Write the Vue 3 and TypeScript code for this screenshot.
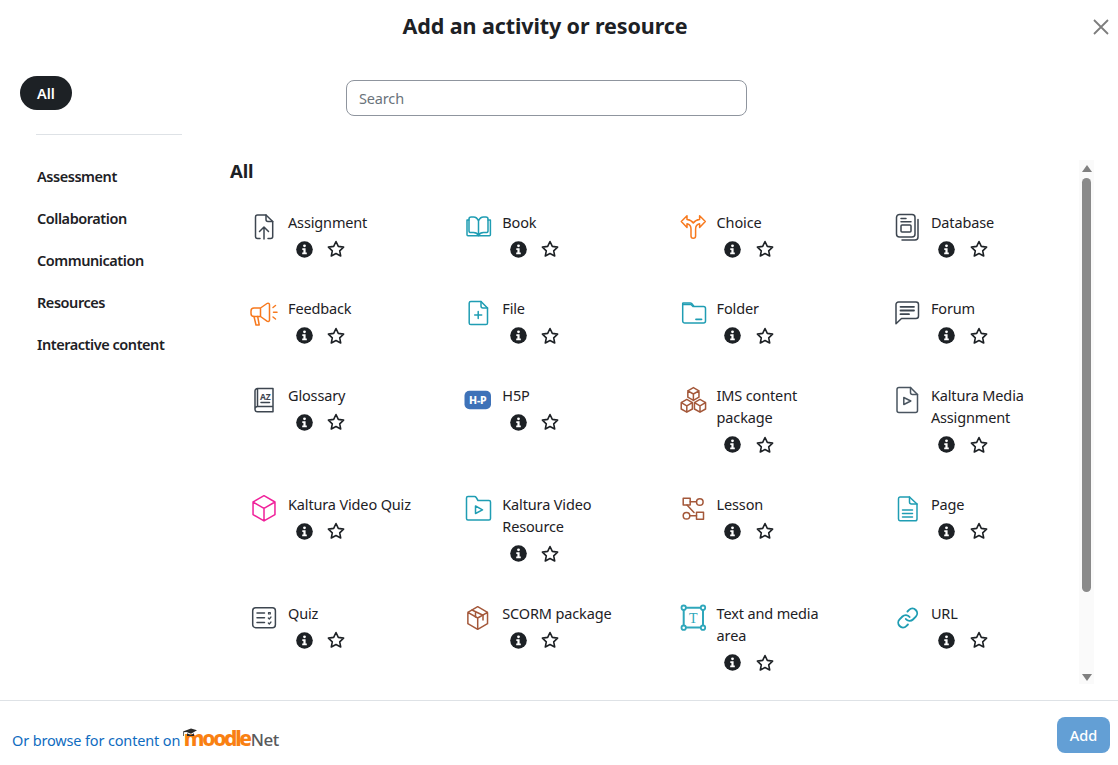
<script setup lang="ts">
interface Activity {
  name: string
  color: string
  icon: string
}

const cube = (cx: number, cy: number, r: number): string => {
  const w = +(r * 0.87).toFixed(2)
  const h = +(r * 0.5).toFixed(2)
  return `<path d="M${cx} ${cy - r}L${cx + w} ${cy - h}V${cy + h}L${cx} ${cy + r}L${cx - w} ${cy + h}V${cy - h}ZM${cx - w} ${cy - h}L${cx} ${cy}L${cx + w} ${cy - h}M${cx} ${cy}V${cy + r}"/>`
}

const dark = '#3d4650'
const teal = '#1f9db3'
const orange = '#f7791e'
const brown = '#a4583a'

const activities: Activity[] = [
  { name: 'Assignment', color: dark, icon: '<path d="M12 27.5H9.5a2 2 0 0 1-2-2V6a2 2 0 0 1 2-2H18l6.7 6.5v15a2 2 0 0 1-2 2H20"/><path d="M18 4v4.5a2 2 0 0 0 2 2h4.7"/><path d="M16 28V16M11.5 20.5L16 16l4.5 4.5"/>' },
  { name: 'Book', color: teal, icon: '<path d="M7 9H5v14.7a1 1 0 0 0 1 1h21.4a1 1 0 0 0 1-1V9H26"/><path d="M16.5 10c-1-2.5-3-4-5-4H9.2C8 6 7 6.8 7 8v12c0 1 .8 1.6 2 1.6h2.5c2 0 4 .8 5 3 1-2.2 3-3 5-3H24c1.2 0 2-.6 2-1.6V8c0-1.200-1-2-2.200-2h-2.300c-2 0-4 1.500-5 4zM16.500 10v14.500"/>' },
  { name: 'Choice', color: orange, icon: '<path d="M14 25a2.300 2.300 0 0 0 4.600 0v-7c0-3 1-4.500 4-5.200v3.700L28.300 10.500 22.600 4.800v3.600c-2.800.2-5 1.600-6.300 3.600-1.300-2-3.500-3.400-6.300-3.600V4.800L4.300 10.500 10 16.500v-3.700c3 .7 4 2.200 4 5.200z"/>' },
  { name: 'Database', color: dark, icon: '<rect x="5.500" y="3.500" width="18.500" height="22.500" rx="3"/><path d="M27 8.500V26a3 3 0 0 1-3 3H11"/><path d="M10 7.500h5M10 10.800h10"/><rect x="10" y="14" width="10" height="7" rx="1"/>' },
  { name: 'Feedback', color: orange, icon: '<path d="M12.500 11H6a3 3 0 0 0-3 3v2.500a3 3 0 0 0 3 3h6.500zM12.500 11l6.500-4.500c1.200-.8 2.500 0 2.500 1.200V23c0 1.200-1.300 2-2.500 1.200l-6.500-4.700"/><path d="M6 19.500L8 28h3.200l-1.500-8.500"/><path d="M25 10.500l2.500-2M25.500 15.300h3.500M25 20l2.500 2"/>' },
  { name: 'File', color: teal, icon: '<path d="M8.800 4.500H19l6.500 6.500v15a1.600 1.600 0 0 1-1.600 1.600H8.800A1.600 1.600 0 0 1 7.200 26V6a1.600 1.600 0 0 1 1.600-1.500z"/><path d="M19 4.500V9a2 2 0 0 0 2 2h4.500"/><path d="M16.200 14.500v7M12.700 18h7"/>' },
  { name: 'Folder', color: teal, icon: '<path d="M6 6h7.500c1 0 1.500.5 2 1.300L17 9.500h9.500a2 2 0 0 1 2 2V24a2 2 0 0 1-2 2H8a2 2 0 0 1-2.300-2V6.500z"/><path d="M5.800 7.500H14l2 2"/><path d="M19 22.300h5.500" stroke-width="1.800"/>' },
  { name: 'Forum', color: dark, icon: '<path d="M7.500 5h17.500a2.500 2.500 0 0 1 2.500 2.500V19a2.500 2.500 0 0 1-2.500 2.500H10.500L5 26.800V7.500A2.500 2.500 0 0 1 7.500 5z"/><path d="M9.500 9.800H23M9.500 13.500H23M9.500 17.200H18" stroke-width="1.800"/>' },
  { name: 'Glossary', color: dark, icon: '<path d="M25 4.500H9.500A2.500 2.500 0 0 0 7 7v18.500A2.500 2.500 0 0 0 9.500 27.800H25zM7 25a2.500 2.500 0 0 1 2.500-2.500H25M9.500 5v17"/><text x="17.300" y="16" font-family="Noto Sans" font-size="8.500" font-weight="700" text-anchor="middle" fill="#3d4650" stroke="none">AZ</text><path d="M13 18.500h8.500" stroke-width="1.500"/>' },
  { name: 'H5P', color: '#3e72b8', icon: '<rect x="2.500" y="6.800" width="26.500" height="18.500" rx="5" fill="#3e72b8" stroke="none"/><text x="15.800" y="20" font-family="Noto Sans" font-size="10.500" font-weight="800" text-anchor="middle" fill="#fff" stroke="none">H-P</text>' },
  { name: 'IMS content package', color: brown, icon: cube(16.4, 10, 6.4) + cube(9.800, 21.800, 6.400) + cube(23, 21.800, 6.400) },
  { name: 'Kaltura Media Assignment', color: '#4a5560', icon: '<path d="M8 3.500h11.500L26.500 10.500V26.500a2 2 0 0 1-2 2H8a2 2 0 0 1-2-2V5.500a2 2 0 0 1 2-2z"/><path d="M19.500 3.500V8.500a2 2 0 0 0 2 2h5"/><path d="M12.800 13.500l7 3.500-7 3.500z"/>' },
  { name: 'Kaltura Video Quiz', color: '#f0209a', icon: cube(16, 15.300, 12.600) },
  { name: 'Kaltura Video Resource', color: teal, icon: '<path d="M6 3.500h6.500c.8 0 1.300.4 1.700 1L16 7.500h11a1.500 1.500 0 0 1 1.500 1.500V25.500A1.500 1.500 0 0 1 27 27H6a1.500 1.500 0 0 1-1.500-1.500V5A1.500 1.500 0 0 1 6 3.500z"/><path d="M13.500 13l7 3.800-7 3.700z"/>' },
  { name: 'Lesson', color: brown, icon: '<rect x="6.200" y="5.300" width="7" height="6.800"/><circle cx="22.800" cy="9" r="3.300"/><path d="M13.200 8.800h6.300M10 12.100L17 19.500"/><circle cx="9.500" cy="22.700" r="3.300"/><rect x="19.500" y="19.200" width="7" height="7"/><path d="M12.800 22.700h6.700"/>' },
  { name: 'Page', color: teal, icon: '<path d="M9 4h9.500l7.500 7v15a1.800 1.800 0 0 1-1.800 1.800H9A1.800 1.800 0 0 1 7.500 26V5.800A1.800 1.800 0 0 1 9 4z"/><path d="M18.500 4v5a2 2 0 0 0 2 2H26"/><path d="M11.500 17h10M11.500 20.500h10M11.500 24h10"/>' },
  { name: 'Quiz', color: dark, icon: '<rect x="4.700" y="5.700" width="22.700" height="20" rx="3"/><path d="M9 11h7.500M9 15.700h7.500M9 20.500h7.500"/><path d="M20.500 10.500h1.800v1.500h-1.800zM20.300 16l1 1 1.700-2M20.300 21l1 1 1.700-2" stroke-width="1.200"/>' },
  { name: 'SCORM package', color: brown, icon: cube(15.700, 16, 11.300) + '<path d="M10 8L21 13.200V18M13.500 10.500V15"/>' },
  { name: 'Text and media area', color: '#2fa7bb', icon: '<rect x="6.700" y="5.700" width="19.300" height="19.800" stroke-width="2"/><circle cx="6.700" cy="5.700" r="2.200" fill="#fff" stroke-width="1.800"/><circle cx="26" cy="5.700" r="2.200" fill="#fff" stroke-width="1.800"/><circle cx="6.700" cy="25.700" r="2.200" fill="#fff" stroke-width="1.800"/><circle cx="26" cy="25.700" r="2.200" fill="#fff" stroke-width="1.800"/><text x="16.300" y="21" font-family="Liberation Serif" font-size="14" font-weight="400" text-anchor="middle" fill="#2fa7bb" stroke="none">T</text>' },
  { name: 'URL', color: teal, icon: '<g transform="translate(5.300 4.600) scale(.95)" stroke-width="2"><path d="M10 13a5 5 0 0 0 7.540.54l3-3a5 5 0 0 0-7.070-7.070l-1.720 1.710"/><path d="M14 11a5 5 0 0 0-7.540-.54l-3 3a5 5 0 0 0 7.070 7.070l1.710-1.710"/></g>' },
]

const categories = ['Assessment', 'Collaboration', 'Communication', 'Resources', 'Interactive content']
</script>

<template>
  <div class="modal">
    <header class="head">
      <h1 class="title">Add an activity or resource</h1>
      <button class="close" type="button" aria-label="Close">
        <svg width="16" height="16" viewBox="0 0 16 16"><path d="M1 1l14 14M15 1L1 15" /></svg>
      </button>
    </header>

    <div class="body">
      <aside class="side">
        <button class="pill" type="button">All</button>
        <hr class="rule" />
        <nav class="nav">
          <a v-for="c in categories" :key="c" class="nav-item">{{ c }}</a>
        </nav>
      </aside>

      <main class="main">
        <div class="search-row">
          <input class="search" type="text" placeholder="Search" />
        </div>
        <div class="scroller">
          <div class="content">
            <h2 class="section">All</h2>
            <div class="grid">
              <div v-for="a in activities" :key="a.name" class="item">
                <svg
                  class="icon"
                  viewBox="0 0 32 32"
                  width="32"
                  height="32"
                  fill="none"
                  :stroke="a.color"
                  stroke-width="1.500"
                  stroke-linecap="round"
                  stroke-linejoin="round"
                  v-html="a.icon"
                ></svg>
                <div class="text">
                  <div class="name">{{ a.name }}</div>
                  <div class="actions">
                    <svg class="info" width="17" height="17" viewBox="0 0 17 17">
                      <circle cx="8.500" cy="8.500" r="8.300" fill="#1d2125" />
                      <circle cx="8.500" cy="4.800" r="1.400" fill="#fff" />
                      <path d="M6.300 7.300h3.300v4.300h1.200v1.700H6.200v-1.700h1.200V9H6.300z" fill="#fff" />
                    </svg>
                    <svg class="star" width="18" height="18" viewBox="0 0 18 18">
                      <path d="M9 1.500l2.300 4.900 5.300.7-3.900 3.700 1 5.200L9 13.500 4.300 16l1-5.200-3.900-3.700 5.300-.7z" fill="none" stroke="#1d2125" stroke-width="1.600" stroke-linejoin="round" />
                    </svg>
                  </div>
                </div>
              </div>
            </div>
          </div>
          <div class="bar">
            <span class="arrow up"></span>
            <span class="thumb"></span>
            <span class="arrow down"></span>
          </div>
        </div>
      </main>
    </div>

    <footer class="foot">
      <a class="net-link">Or browse for content on
        <span class="logo">
          <svg class="hat" width="14" height="10" viewBox="0 0 14 10">
            <path d="M0 3.500L8 .5l6 1.800-6 3.400L3.500 4 1 4.300V8l-.7 0V4z" fill="#2b2b2b" />
            <path d="M4 5.200l4 1.800 3-1.700V8H4z" fill="#2b2b2b" />
          </svg>
          <span class="moodle">moodle</span><span class="net">Net</span>
        </span>
      </a>
      <button class="add" type="button">Add</button>
    </footer>
  </div>
</template>

<style scoped>
.modal {
  height: 765px;
  display: flex;
  flex-direction: column;
  font-family: "Noto Sans", "Open Sans", sans-serif;
  font-size: 14.500px;
  letter-spacing: -0.150px;
  line-height: 22.500px;
  color: #1d2125;
  background: #fff;
  overflow: hidden;
}
.head {
  height: 55px;
  flex: none;
  display: flex;
  align-items: center;
}
.title {
  flex: 1;
  margin: -4px 0 0;
  text-align: center;
  font-size: 21.500px;
  font-weight: 700;
  line-height: 30px;
  letter-spacing: -0.100px;
}
.close {
  width: 28px;
  height: 28px;
  margin-top: -2px;
  padding: 0 0 0 3px;
  border: 0;
  background: none;
  display: flex;
  align-items: center;
}
.close path {
  stroke: #7d7d7d;
  stroke-width: 1.800;
  fill: none;
}
.body {
  flex: 1;
  min-height: 0;
  display: flex;
}
.side {
  width: 200px;
  flex: none;
  padding: 21px 0 0 20px;
  box-sizing: border-box;
}
.pill {
  display: block;
  width: 52px;
  height: 34px;
  padding: 0;
  border: 0;
  border-radius: 17px;
  background: #1d2125;
  color: #fff;
  font: 600 14.500px/34px "Noto Sans", sans-serif;
}
.rule {
  width: 146px;
  margin: 24px 0 0 16px;
  border: 0;
  border-top: 1px solid #dee2e6;
}
.nav {
  display: flex;
  flex-direction: column;
  margin: 20px 0 0 17px;
}
.nav-item {
  height: 42px;
  line-height: 42px;
  font-weight: 600;
  letter-spacing: -0.450px;
  white-space: nowrap;
}
.main {
  flex: 1;
  min-width: 0;
  display: flex;
  flex-direction: column;
}
.search-row {
  padding: 25px 0 0 146px;
  height: 101px;
  box-sizing: border-box;
  flex: none;
}
.search {
  display: block;
  width: 401px;
  height: 36px;
  box-sizing: border-box;
  border: 1px solid #8f959e;
  border-radius: 8px;
  padding: 0 12px;
  font: 14.500px "Noto Sans", sans-serif;
  letter-spacing: -0.150px;
  color: #1d2125;
  outline: none;
}
.search::placeholder {
  color: #6a737b;
  opacity: 1;
}
.scroller {
  height: 528px;
  flex: none;
  display: flex;
  padding-right: 24px;
}
.content {
  flex: 1;
  min-width: 0;
  overflow: hidden;
}
.section {
  margin: 0.500px 0 0 30px;
  height: 27px;
  font-size: 18.500px;
  font-weight: 700;
  line-height: 27px;
}
.grid {
  margin: 28.250px 0 0 40px;
  display: grid;
  grid-template-columns: repeat(4, 214.300px);
}
.item {
  display: flex;
  padding: 0 0 34px 8px;
  min-width: 0;
}
.icon {
  flex: none;
  margin-top: -1px;
}
.text {
  margin-left: 8px;
  width: 128px;
}
.name {
  line-height: 22.500px;
  position: relative;
  top: -1px;
}
.actions {
  height: 30px;
  display: flex;
  align-items: center;
  padding-left: 7.500px;
  gap: 14.500px;
}
.info,
.star {
  flex: none;
}
.bar {
  width: 15px;
  flex: none;
  margin: 4px 0 0 -1px;
  background: #fafafa;
  display: flex;
  flex-direction: column;
  align-items: center;
  padding-top: 5px;
  box-sizing: border-box;
}
.arrow {
  width: 0;
  height: 0;
  border-left: 5px solid transparent;
  border-right: 5px solid transparent;
}
.arrow.up {
  border-bottom: 7px solid #808080;
}
.arrow.down {
  border-top: 7px solid #808080;
  margin-top: 82px;
}
.thumb {
  width: 9px;
  height: 414px;
  margin-top: 6px;
  border-radius: 5px;
  background: #8a8a8a;
}
.foot {
  height: 65px;
  flex: none;
  box-sizing: border-box;
  border-top: 1px solid #dee2e6;
  display: flex;
  justify-content: space-between;
  align-items: flex-start;
  padding: 16px 8px 0 12px;
}
.net-link {
  margin-top: 10px;
  color: #0f6cbf;
  white-space: nowrap;
}
.logo {
  position: relative;
  display: inline-block;
  line-height: 22px;
  vertical-align: baseline;
}
.hat {
  position: absolute;
  left: -1px;
  top: 1px;
}
.moodle {
  color: #f98012;
  font: 800 21px/22px "Noto Sans", sans-serif;
  letter-spacing: -2.300px;
}
.net {
  color: #58595b;
  font: 500 17px/22px "Noto Sans", sans-serif;
  letter-spacing: -0.500px;
  margin-left: 1px;
}
.add {
  width: 53px;
  height: 36px;
  padding: 0;
  border: 0;
  border-radius: 8px;
  background: #639fd5;
  color: #fff;
  font: 500 14.500px "Noto Sans", sans-serif;
}
</style>

<style>
html,
body {
  margin: 0;
  background: #fff;
}
</style>
